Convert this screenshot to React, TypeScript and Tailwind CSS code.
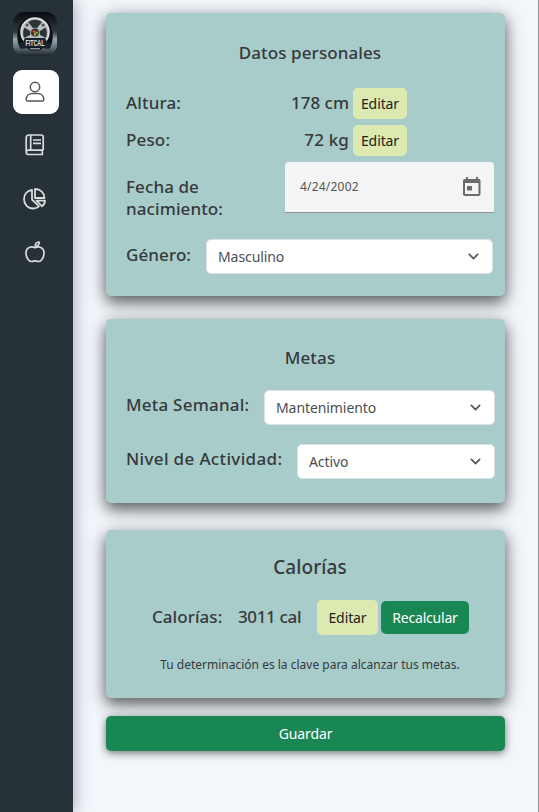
import React from "react";

const CARD =
  "flex flex-col rounded-[5px] bg-[#a8ccca] w-[399px] shadow-[0_6px_14px_rgba(0,0,0,0.5),0_5px_22px_rgba(0,0,0,0.25)]";

const EDIT = "rounded-[5px] bg-[#dce9b0] text-[14px] font-normal tracking-[-0.1px] text-[#222]";

function Logo() {
  return (
    <svg width="44" height="44" viewBox="0 0 44 44">
      <defs>
        <linearGradient id="lg" x1="0" y1="0" x2="0" y2="1">
          <stop offset="0" stopColor="#080c10" />
          <stop offset="0.45" stopColor="#30373d" />
          <stop offset="0.62" stopColor="#98a5ae" />
          <stop offset="0.8" stopColor="#66727b" />
          <stop offset="1" stopColor="#1b242a" />
        </linearGradient>
      </defs>
      <rect width="44" height="44" rx="11" fill="url(#lg)" />
      <path d="M7 36C0 22 7 4 22 4s22 18 15 32z" fill="#0c1014" />
      <circle cx="22" cy="20" r="14" fill="#b9bebe" stroke="#dfe1e1" strokeWidth="1.500" />
      <g fill="#2c3335">
        <path d="M15 10q7-4.500 14 0l-5 6h-4z" />
        <path d="M11.500 15.500L17 19v4l-6 3q-2-6 .5-10.500zM32.500 15.500L27 19v4l6 3q2-6-.5-10.500z" />
      </g>
      <g fill="#4a5153">
        <circle cx="14" cy="13" r="1.500" />
        <circle cx="30" cy="13" r="1.500" />
      </g>
      <circle cx="22" cy="20.500" r="4.300" fill="#202729" stroke="#8b9292" />
      <circle cx="21" cy="19.500" r="1.600" fill="#d9462c" />
      <circle cx="23.600" cy="20.800" r="1.500" fill="#64a936" />
      <circle cx="21.800" cy="22.500" r="1.200" fill="#e3a32e" />
      <path d="M5 31l5-1 2-4h20l2 4 5 1-3 6q-14-3-28 0z" fill="#152430" />
      <text x="22" y="34" textAnchor="middle" fontFamily="Liberation Sans, sans-serif" fontWeight="700" fontSize="9" textLength="19" lengthAdjust="spacingAndGlyphs" fill="#dde0e1">FITCAL</text>
      <path d="M14 35.500h16l-3 3H17z" fill="#0c1216" />
      <rect x="17" y="36" width="10" height="1.500" fill="#899298" />
    </svg>
  );
}

function PersonIcon() {
  return (
    <svg width="20" height="22" viewBox="0 0 20 22" fill="none" stroke="#555" strokeWidth="1.500">
      <circle cx="10" cy="6" r="4.700" />
      <path d="M1.200 18.500c0-4 3-6 6.300-6h5c3.300 0 6.300 2 6.300 6 0 1-.5 1.600-1.500 1.600H2.700c-1 0-1.500-.6-1.500-1.600z" />
    </svg>
  );
}

function BookIcon() {
  return (
    <svg width="20" height="22" viewBox="0 0 20 22" fill="none" stroke="#d9dcdd" strokeWidth="1.700">
      <path d="M18.200 16.200V3q0-2-2-2H4Q1.200 1 1.200 4v14M5.700 1v15M18.200 16.200H3.500c-3 0-3 4.300 0 4.300h14.700M17.300 16.200v4.300M8 6h8M8 9.300h8" />
    </svg>
  );
}

function PieIcon() {
  return (
    <svg width="23" height="22" viewBox="0 0 23 22" fill="none" stroke="#d9dcdd" strokeWidth="1.800" strokeLinejoin="round">
      <path d="M9 2C4.500 2.300 1 6 1 11c0 5.500 4 9.500 9 9.500 2.500 0 4.500-.8 6-2.200L9 11.500z" />
      <path d="M12 1v9h9.500C21.500 5 17.500 1 12 1zM13.500 12.700h8.500c0 2-1.200 4.300-3 5.600z" />
    </svg>
  );
}

function AppleIcon() {
  return (
    <svg width="20" height="22" viewBox="0 0 20 22" fill="none" stroke="#d9dcdd" strokeWidth="1.700" strokeLinejoin="round">
      <path d="M10 6.800C8 5.800 6.300 5.700 4.800 6.200 2.300 7 1 9 1 12c0 4.500 2.700 8.500 5.700 8.500 1.300 0 2.300-.7 3.300-.7s2 .7 3.300.7c3 0 5.700-4 5.700-8.500 0-3-1.300-5-3.800-5.800-1.500-.5-3.200-.4-5.200.6z" />
      <path d="M10.300 5.200c-.3-2.500 1.200-4.100 3.900-4.200.2 2.500-1.300 4.200-3.900 4.200z" />
    </svg>
  );
}

function CalendarIcon() {
  return (
    <svg width="24" height="24" viewBox="0 0 24 24" fill="#6b6b6b">
      <path d="M19 4h-1V2h-2v2H8V2H6v2H5c-1.700 0-2 .9-2 2v13c0 1.100.9 2 2 2h13.500c1.100 0 2-.9 2-2V6c0-1.100-.4-2-1.500-2zm-.5 15H5V8h13.500v11zM7 11h5v4.500H7z" />
    </svg>
  );
}

function Select({ value, className }: { value: string; className: string }) {
  return (
    <button className={"flex h-[35px] items-center justify-between rounded-[5px] border border-[#dbe1e4] bg-white pl-[11px] pr-[13px] text-[14px] font-normal tracking-[-0.08px] text-[#4b4e52] " + className}>
      <span>{value}</span>
      <svg className="mt-[-1px]" width="11" height="11" viewBox="0 0 16 16" fill="none" stroke="#555b61" strokeWidth="2.600" strokeLinecap="round" strokeLinejoin="round">
        <path d="m2 5 6 6 6-6" />
      </svg>
    </button>
  );
}

export default function App() {
  return (
    <div className="flex h-[812px] w-[539px] overflow-hidden border-r border-[#929599] bg-[#f3f7fb] text-[#36393a] font-['Noto_Sans','Open_Sans',sans-serif]">
      <nav className="flex w-[73px] shrink-0 flex-col items-start bg-[#273238] pl-[13px] pt-[12px] shadow-[2px_0_15px_rgba(60,60,110,0.4)]">
        <Logo />
        <div className="mt-[14px] flex h-[44px] w-[46px] items-center justify-center rounded-[9px] bg-white pr-[2px]"><PersonIcon /></div>
        <div className="mt-[20px] flex h-[22px] w-[46px] justify-center pr-[2px]"><BookIcon /></div>
        <div className="mt-[32px] flex h-[22px] w-[46px] justify-center pr-[3px]"><PieIcon /></div>
        <div className="mt-[31px] flex h-[22px] w-[46px] justify-center pr-[2px]"><AppleIcon /></div>
      </nav>
      <main className="ml-[33px] flex w-[399px] shrink-0 flex-col pt-[13px] text-[17px] font-medium leading-[22px]">
        <section className={CARD + " h-[283px]"}>
          <h2 className="mt-[29px] pl-[9px] text-center tracking-[0.1px]">Datos personales</h2>
          <div className="mt-[21px] flex h-[37px] items-center pl-[20px]">
            <span className="mt-[-2px] w-[96px] tracking-[0.15px]">Altura:</span>
            <span className="mt-[-2px] w-[127px] text-right">178 cm</span>
            <button className={EDIT + " ml-[4px] h-[31px] w-[54px]"}>Editar</button>
          </div>
          <div className="flex h-[37px] items-center pl-[20px]">
            <span className="mt-[-2px] w-[96px] tracking-[0.15px]">Peso:</span>
            <span className="mt-[-2px] w-[127px] text-right tracking-[0.15px]">72 kg</span>
            <button className={EDIT + " ml-[4px] h-[31px] w-[54px]"}>Editar</button>
          </div>
          <div className="flex pl-[20px] pt-[3px]">
            <div className="w-[159px] pt-[14px] tracking-[0.1px]">Fecha de<br />nacimiento:</div>
            <div className="flex h-[51px] w-[209px] items-center justify-between rounded-t-[4px] border-b border-[#8f9292] bg-[#f4f4f4] pl-[15px] pr-[10px] text-[12px] font-normal tracking-[0.2px] text-[#555]">
              <span>4/24/2002</span><CalendarIcon />
            </div>
          </div>
          <div className="mt-[19px] flex pl-[20px]">
            <span className="w-[80px] pt-[5px] tracking-[0.1px]">Género:</span>
            <Select value="Masculino" className="w-[287px]" />
          </div>
        </section>
        <section className={CARD + " mt-[23px] h-[184px]"}>
          <h2 className="mt-[28px] pl-[9px] text-center tracking-[0.15px]">Metas</h2>
          <div className="mt-[21px] flex pl-[20px]">
            <span className="w-[138px] pt-[4px] tracking-[0.22px]">Meta Semanal:</span>
            <Select value="Mantenimiento" className="w-[231px]" />
          </div>
          <div className="mt-[19px] flex pl-[20px]">
            <span className="w-[171px] pt-[4px] tracking-[0.35px]">Nivel de Actividad:</span>
            <Select value="Activo" className="w-[198px]" />
          </div>
        </section>
        <section className={CARD + " mt-[27px] h-[168px]"}>
          <h2 className="mt-[26px] pl-[9px] text-center text-[19px] tracking-[0.1px]">Calorías</h2>
          <div className="mt-[22px] flex h-[35px] items-center pl-[46px]">
            <span className="mt-[-2px] w-[86px] tracking-[0.05px]">Calorías:</span>
            <span className="mt-[-2px] w-[79px] tracking-[-0.35px]">3011 cal</span>
            <button className={EDIT + " h-[35px] w-[61px]"}>Editar</button>
            <button className="ml-[3px] h-[33px] w-[88px] rounded-[5px] bg-[#198754] text-[14px] font-normal tracking-[-0.2px] text-white">Recalcular</button>
          </div>
          <p className="mt-[19px] pl-[9px] text-center text-[12px] font-normal">Tu determinación es la clave para alcanzar tus metas.</p>
        </section>
        <button className="mt-[18px] h-[35px] rounded-[5px] bg-[#198754] text-[14px] font-normal tracking-[-0.1px] text-white shadow-[0_2px_8px_rgba(0,0,0,0.55)]">Guardar</button>
      </main>
    </div>
  );
}
